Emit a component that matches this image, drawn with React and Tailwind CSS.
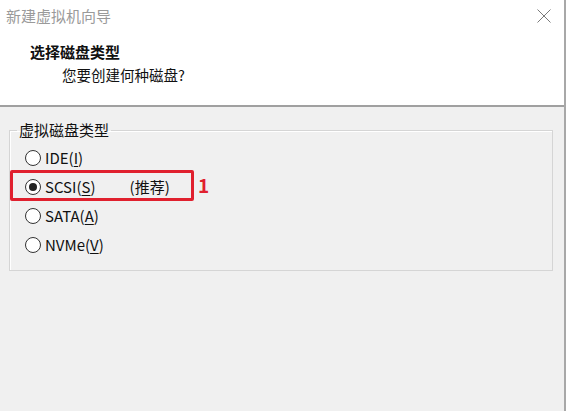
import React from "react";

const font = { fontFamily: '"Noto Sans CJK SC", "Noto Sans", sans-serif' };

function Radio({ checked }) {
  return (
    <span className="flex h-[16px] w-[16px] shrink-0 items-center justify-center rounded-full border border-[#333] bg-white">
      {checked && <span className="h-[8px] w-[8px] rounded-full bg-[#222]" />}
    </span>
  );
}

function Option({ label, keyChar, checked, extra, marked }) {
  return (
    <div className="relative flex h-[29px] items-center gap-[4px] pl-[15px]">
      <Radio checked={checked} />
      <span className="text-[15px] leading-[20px] text-[#111]">
        {label}(<span className="underline underline-offset-2">{keyChar}</span>)
      </span>
      {extra && <span className="ml-[30px] text-[15px] leading-[20px] text-[#111]">{extra}</span>}
      {marked && (
        <>
          <div className="absolute left-0 top-[-2px] h-[31px] w-[184px] rounded-[2px] border-[3px] border-[#e0202e]" />
          <div className="absolute left-[188px] top-[3px] text-[19px] font-bold leading-[20px] text-[#e0202e]">1</div>
        </>
      )}
    </div>
  );
}

export default function App() {
  return (
    <div className="flex h-[411px] w-[568px] bg-white" style={font}>
      <div className="flex w-[566px] flex-col border-r-2 border-[#a8a8a8]">
        {/* Header */}
        <div className="relative h-[107px] shrink-0 border-b-2 border-[#a0a0a0] bg-white">
          <div className="pl-[6px] pt-[6px] text-[15px] leading-[20px] text-[#9a9a9a]">新建虚拟机向导</div>
          <svg className="absolute left-[537px] top-[9px]" width="14" height="14" viewBox="0 0 14 14">
            <path d="M0.5 0.5 L13.5 13.5 M13.5 0.5 L0.5 13.5" stroke="#7a7a7a" strokeWidth="1" fill="none" />
          </svg>
          <div className="pl-[30px] pt-[16px] text-[15px] font-bold leading-[20px] text-[#111]">选择磁盘类型</div>
          <div className="pl-[62px] pt-[3px] text-[14.5px] leading-[20px] text-[#111]">您要创建何种磁盘?</div>
        </div>

        {/* Content */}
        <div className="flex-1 bg-[#f0f0f0] px-[9px] pt-[15px]">
          <fieldset className="h-[149px] w-[544px] border border-[#d5d5d5] shadow-[inset_1px_1px_0_#fff] pt-[5px]">
            <legend className="ml-[7px] px-[2px] text-[15px] leading-[16px] text-[#111]">虚拟磁盘类型</legend>
            <Option label="IDE" keyChar="I" />
            <Option label="SCSI" keyChar="S" checked extra="(推荐)" marked />
            <Option label="SATA" keyChar="A" />
            <Option label="NVMe" keyChar="V" />
          </fieldset>
        </div>
      </div>
    </div>
  );
}
